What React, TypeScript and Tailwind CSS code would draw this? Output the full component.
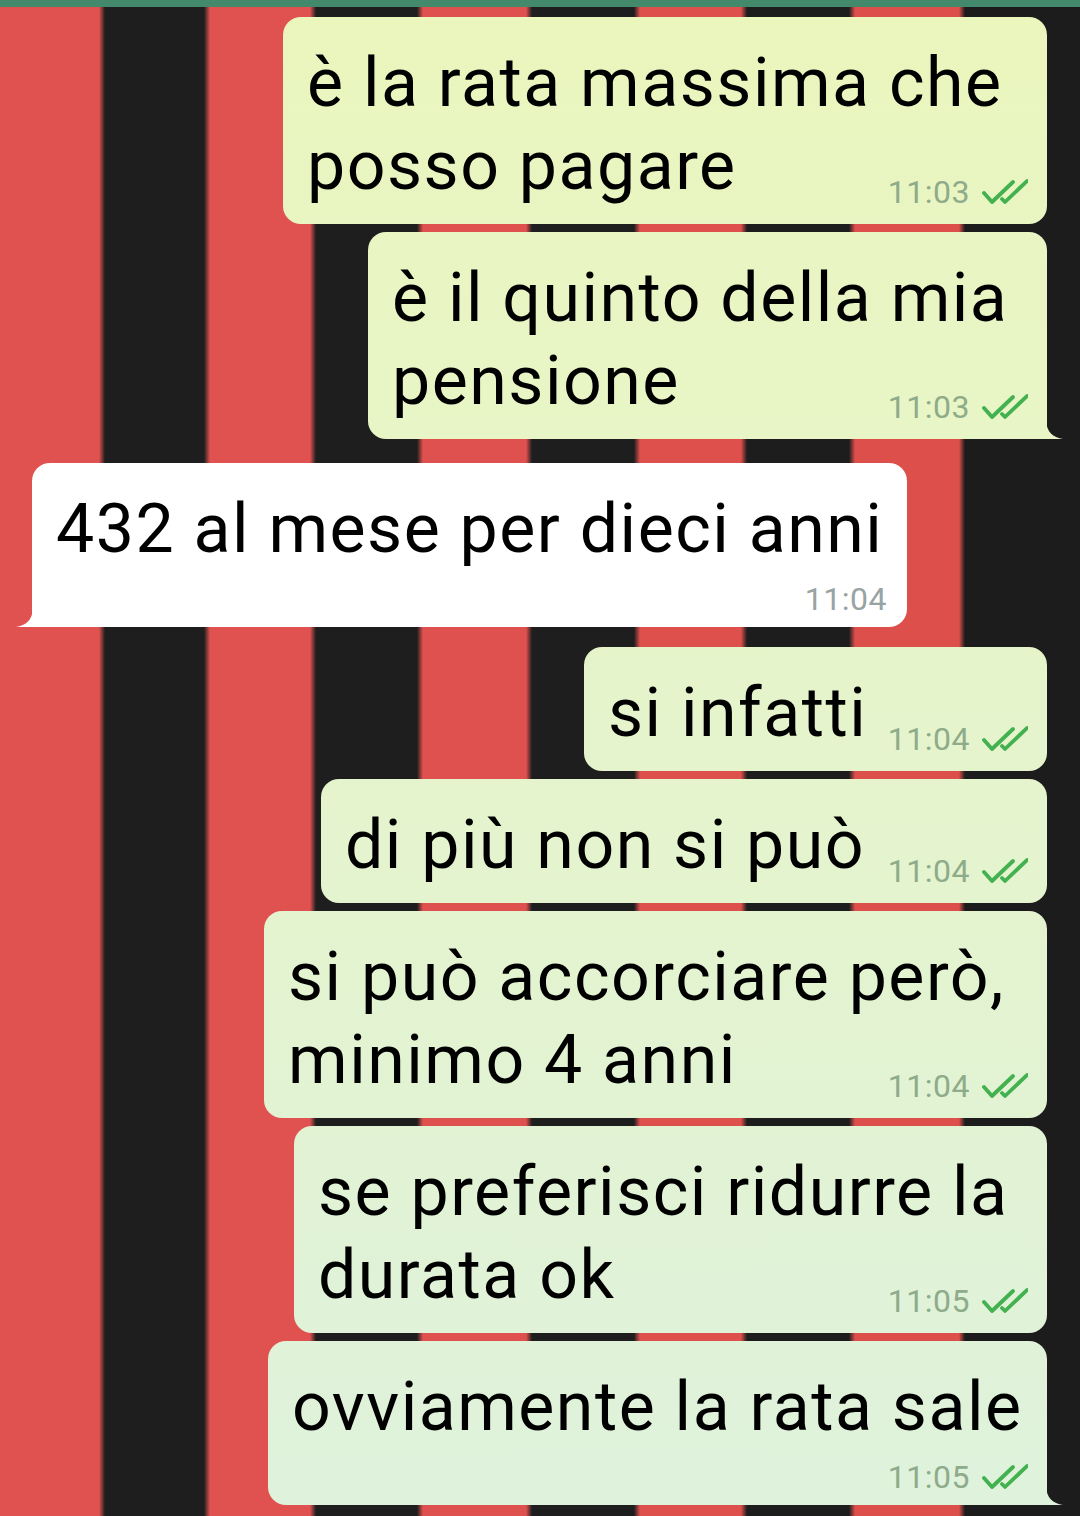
import React from "react";

type Msg = {
  out: boolean;
  w: string;
  mt: string;
  lines: string[];
  time: string;
  tail?: boolean;
  below?: boolean;
  bg: string;
  tailColor: string;
};

const msgs: Msg[] = [
  { out: true, w: "w-[764px]", mt: "mt-0", lines: ["è la rata massima che", "posso pagare"], time: "11:03", bg: "from-[#ebf6bd] to-[#e9f5c2]", tailColor: "#e9f5c2" },
  { out: true, w: "w-[679px]", mt: "mt-[8px]", lines: ["è il quinto della mia", "pensione"], time: "11:03", tail: true, bg: "from-[#e9f5c2] to-[#e8f5c6]", tailColor: "#e8f5c6" },
  { out: false, w: "w-[875px]", mt: "mt-[24px]", lines: ["432 al mese per dieci anni"], time: "11:04", tail: true, below: true, bg: "from-[#ffffff] to-[#ffffff]", tailColor: "#ffffff" },
  { out: true, w: "w-[463px]", mt: "mt-[20px]", lines: ["si infatti"], time: "11:04", bg: "from-[#e6f4ca] to-[#e5f4cd]", tailColor: "#e5f4cd" },
  { out: true, w: "w-[726px]", mt: "mt-[8px]", lines: ["di più non si può"], time: "11:04", bg: "from-[#e5f4cd] to-[#e4f4cf]", tailColor: "#e4f4cf" },
  { out: true, w: "w-[783px]", mt: "mt-[8px]", lines: ["si può accorciare però,", "minimo 4 anni"], time: "11:04", bg: "from-[#e4f4cf] to-[#e2f3d4]", tailColor: "#e2f3d4" },
  { out: true, w: "w-[753px]", mt: "mt-[8px]", lines: ["se preferisci ridurre la", "durata ok"], time: "11:05", bg: "from-[#e2f3d4] to-[#e0f2d8]", tailColor: "#e0f2d8" },
  { out: true, w: "w-[779px]", mt: "mt-[8px]", lines: ["ovviamente la rata sale"], time: "11:05", tail: true, below: true, bg: "from-[#e0f2d8] to-[#dff2dc]", tailColor: "#dff2dc" },
];

function Ticks() {
  return (
    <svg width="46" height="26" viewBox="0 0 46 26" className="mb-[4px] ml-[12px] shrink-0">
      <path d="M2 15 L10 24 L31 4" fill="none" stroke="#43b14f" strokeWidth="3.8" strokeLinecap="round" strokeLinejoin="round" />
      <path d="M20 21 L23 24 L45 3" fill="none" stroke="#43b14f" strokeWidth="3.8" strokeLinecap="round" strokeLinejoin="round" />
    </svg>
  );
}

function Meta({ time, out }: { time: string; out: boolean }) {
  return (
    <div className="flex items-end shrink-0">
      <span className={`text-[32px] leading-none tracking-[0.5px] ${out ? "text-[#8eab8a]" : "text-[#98a3a4]"}`}>{time}</span>
      {out && <Ticks />}
    </div>
  );
}

const lineCls = "text-[68px] leading-[83px] tracking-[1.5px] text-black whitespace-nowrap";

function Bubble({ m }: { m: Msg }) {
  const last = m.lines[m.lines.length - 1];
  const first = m.lines.slice(0, -1);
  const corner = m.tail ? (m.out ? "rounded-br-none" : "rounded-bl-none") : "";
  return (
    <div className={`${m.out ? "self-end" : "self-start"} ${m.mt} ${m.w} relative`}>
      <div
        className={`bg-linear-to-b ${m.bg} rounded-[18px] ${corner} pl-[24px] ${m.out ? "pr-[19px]" : "pr-[20px]"} pt-[25px] ${m.below ? "pb-[12px]" : "pb-[16px]"}`}
      >
        {first.map((l, i) => (
          <div key={i} className={lineCls}>{l}</div>
        ))}
        {m.below ? (
          <>
            <div className={lineCls}>{last}</div>
            <div className="h-[44px] flex justify-end items-end">
              <Meta time={m.time} out={m.out} />
            </div>
          </>
        ) : (
          <div className="flex justify-between items-end">
            <div className={lineCls}>{last}</div>
            <Meta time={m.time} out={m.out} />
          </div>
        )}
      </div>
      {m.tail && m.out && (
        <svg width="17" height="19" viewBox="0 0 17 19" className="absolute bottom-0 right-[-16px]">
          <path d="M0 0 C0.5 12 7 17.5 17 19 L0 19 Z" fill={m.tailColor} />
        </svg>
      )}
      {m.tail && !m.out && (
        <svg width="17" height="19" viewBox="0 0 17 19" className="absolute bottom-0 left-[-16px]">
          <path d="M17 0 C16.5 12 10 17.5 0 19 L17 19 Z" fill={m.tailColor} />
        </svg>
      )}
    </div>
  );
}

export default function App() {
  return (
    <div className="w-[1080px] h-[1516px] overflow-hidden font-[Roboto,sans-serif] bg-[linear-gradient(90deg,#e0524f_0px,#e0524f_99px,#1f1e1e_105px,#1f1e1e_204px,#e0524f_210px,#e0524f_310px,#1f1e1e_316px,#1f1e1e_417px,#df514e_423px,#df514e_526px,#1f1e1e_532px,#1f1e1e_634px,#dd504c_640px,#dd504c_741px,#1e1d1d_747px,#1e1d1d_849px,#dc4f4b_855px,#dc4f4b_959px,#1c1c1c_965px,#1c1c1c_1080px)]">
      <div className="h-[7px] bg-[#428a6b]" />
      <div className="flex flex-col pt-[10px] pl-[32px] pr-[33px]">
        {msgs.map((m, i) => (
          <Bubble key={i} m={m} />
        ))}
      </div>
    </div>
  );
}
